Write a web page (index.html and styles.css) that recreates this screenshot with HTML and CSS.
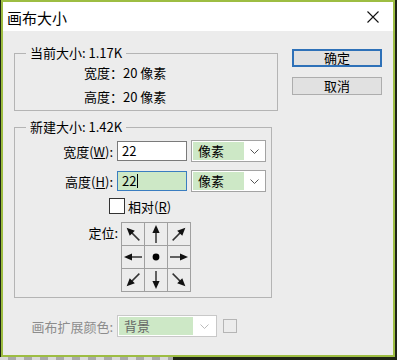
FILE: index.html
```html
<!DOCTYPE html>
<html lang="zh-CN">
<head>
    <meta charset="UTF-8">
    <title>画布大小</title>
    <link rel="stylesheet" href="styles.css">
</head>
<body>

    <div class="dialog">
        <div class="titlebar">
            <span class="title">画布大小</span>
            <svg class="close" width="12" height="12" viewBox="0 0 12 12">
                <path d="M0.5 0.5 L11.5 11.5 M11.5 0.5 L0.5 11.5" stroke="#111" stroke-width="1.1" fill="none"/>
            </svg>
        </div>

        <div class="dialog-body">
            <div class="main">
                <!-- current size -->
                <fieldset class="group group-current">
                    <legend>当前大小: 1.17K</legend>
                    <div class="info-row">宽度：20 像素</div>
                    <div class="info-row">高度：20 像素</div>
                </fieldset>

                <!-- new size -->
                <fieldset class="group group-new">
                    <legend>新建大小: 1.42K</legend>

                    <div class="field-row">
                        <span class="field-label">宽度(<u>W</u>):</span>
                        <div class="input">22</div>
                        <div class="select">
                            <span class="select-value">像素</span>
                            <span class="select-arrow">
                                <svg width="9" height="5" viewBox="0 0 9 5"><path d="M0.5 0.5 L4.5 4.5 L8.5 0.5" stroke="#555" fill="none"/></svg>
                            </span>
                        </div>
                    </div>

                    <div class="field-row">
                        <span class="field-label">高度(<u>H</u>):</span>
                        <div class="input input-focus">22<span class="caret"></span></div>
                        <div class="select">
                            <span class="select-value">像素</span>
                            <span class="select-arrow">
                                <svg width="9" height="5" viewBox="0 0 9 5"><path d="M0.5 0.5 L4.5 4.5 L8.5 0.5" stroke="#555" fill="none"/></svg>
                            </span>
                        </div>
                    </div>

                    <div class="check-row">
                        <span class="checkbox"></span>
                        <span class="check-label">相对(<u>R</u>)</span>
                    </div>

                    <div class="anchor-row">
                        <span class="anchor-label">定位:</span>
                        <div class="anchor-grid">
                            <div class="cell"><svg class="arrow rot-315" viewBox="0 0 22 22"><path d="M11 20 V8" stroke="#333" stroke-width="1.5"/><path d="M11 2 L7.4 10 L14.6 10 Z" fill="#111"/></svg></div>
                            <div class="cell"><svg class="arrow" viewBox="0 0 22 22"><path d="M11 20 V8" stroke="#333" stroke-width="1.5"/><path d="M11 2 L7.4 10 L14.6 10 Z" fill="#111"/></svg></div>
                            <div class="cell"><svg class="arrow rot-45" viewBox="0 0 22 22"><path d="M11 20 V8" stroke="#333" stroke-width="1.5"/><path d="M11 2 L7.4 10 L14.6 10 Z" fill="#111"/></svg></div>
                            <div class="cell"><svg class="arrow rot-270" viewBox="0 0 22 22"><path d="M11 20 V8" stroke="#333" stroke-width="1.5"/><path d="M11 2 L7.4 10 L14.6 10 Z" fill="#111"/></svg></div>
                            <div class="cell"><svg class="arrow" viewBox="0 0 22 22"><circle cx="11" cy="11" r="3.4" fill="#000"/></svg></div>
                            <div class="cell"><svg class="arrow rot-90" viewBox="0 0 22 22"><path d="M11 20 V8" stroke="#333" stroke-width="1.5"/><path d="M11 2 L7.4 10 L14.6 10 Z" fill="#111"/></svg></div>
                            <div class="cell"><svg class="arrow rot-225" viewBox="0 0 22 22"><path d="M11 20 V8" stroke="#333" stroke-width="1.5"/><path d="M11 2 L7.4 10 L14.6 10 Z" fill="#111"/></svg></div>
                            <div class="cell"><svg class="arrow rot-180" viewBox="0 0 22 22"><path d="M11 20 V8" stroke="#333" stroke-width="1.5"/><path d="M11 2 L7.4 10 L14.6 10 Z" fill="#111"/></svg></div>
                            <div class="cell"><svg class="arrow rot-135" viewBox="0 0 22 22"><path d="M11 20 V8" stroke="#333" stroke-width="1.5"/><path d="M11 2 L7.4 10 L14.6 10 Z" fill="#111"/></svg></div>
                        </div>
                    </div>
                </fieldset>

                <!-- canvas extension colour (disabled) -->
                <div class="extend-row">
                    <span class="extend-label">画布扩展颜色:</span>
                    <div class="select select-disabled">
                        <span class="select-value">背景</span>
                        <span class="select-arrow">
                            <svg width="9" height="5" viewBox="0 0 9 5"><path d="M0.5 0.5 L4.5 4.5 L8.5 0.5" stroke="#bbb" fill="none"/></svg>
                        </span>
                    </div>
                    <span class="swatch"></span>
                </div>
            </div>

            <div class="buttons">
                <button class="btn btn-default">确定</button>
                <button class="btn">取消</button>
            </div>
        </div>
    </div>

    <div class="backdrop">
        <div class="checker"></div>
    </div>

</body>
</html>
```

FILE: styles.css
```css
/* Basic reset */
* {
    margin: 0;
    padding: 0;
    box-sizing: border-box;
}

body {
    font-family: "Noto Sans CJK SC", "Noto Sans", sans-serif;
    font-size: 13px;
    color: #000;
    background: #1e2416;
    width: 397px;
    height: 360px;
    overflow: hidden;
}

.dialog {
    margin-left: 1px;
    width: 394px;
    height: 357px;
    border: 2px solid #9dbd42;
    background: #ececec;
    display: flex;
    flex-direction: column;
}

/* Title bar */
.titlebar {
    height: 29px;
    background: #fff;
    display: flex;
    align-items: center;
    justify-content: space-between;
    padding: 1px 14px 0 4px;
}

.title {
    font-size: 15px;
    line-height: 1;
}

.dialog-body {
    display: flex;
    padding: 14px 0 0 11px;
}

.main {
    width: 264px;
}

/* Group boxes */
.group {
    border: 1px solid #b4b4b4;
    min-width: 0;
}

.group legend {
    margin-left: 11px;
    padding: 0 4px;
    line-height: 16px;
}

.group-current {
    width: 264px;
    padding: 0 0 1px 0;
}

.info-row {
    line-height: 24px;
    padding-left: 69px;
}

.group-new {
    width: 258px;
    margin-top: 8px;
    padding: 5px 0 5px 0;
}

.field-row {
    display: flex;
    align-items: center;
    height: 22px;
}

.field-row + .field-row {
    margin-top: 8px;
}

.field-label {
    width: 98px;
    margin-right: 4px;
    text-align: right;
}

.input {
    width: 70px;
    height: 20px;
    border: 1px solid #7a7a7a;
    background: #fff;
    padding-left: 4px;
    line-height: 18px;
    display: flex;
    align-items: center;
}

.input-focus {
    border-color: #3a7dc0;
    background: #cde8c6;
}

.caret {
    width: 1px;
    height: 14px;
    background: #000;
    margin-left: 1px;
}

.select {
    width: 75px;
    height: 22px;
    margin-left: 4px;
    border: 1px solid #a3a3a3;
    background: #fff;
    display: flex;
    padding: 1px;
}

.select-value {
    width: 51px;
    background: #cde8c6;
    padding-left: 5px;
    line-height: 18px;
}

.select-arrow {
    flex: 1;
    display: flex;
    align-items: center;
    justify-content: center;
}

/* Relative checkbox */
.check-row {
    display: flex;
    align-items: center;
    height: 16px;
    margin-top: 6px;
    padding-left: 94px;
}

.checkbox {
    width: 16px;
    height: 16px;
    border: 1px solid #333;
    background: #fff;
}

.check-label {
    margin-left: 3px;
}

/* Anchor grid */
.anchor-row {
    display: flex;
    margin-top: 8px;
}

.anchor-label {
    width: 103px;
    margin-right: 3px;
    text-align: right;
    line-height: 22px;
}

.anchor-grid {
    display: grid;
    grid-template-columns: repeat(3, 22px);
    grid-auto-rows: 22px;
    gap: 1px;
    padding: 1px;
    width: 70px;
    background: #a0a0a0;
}

.cell {
    background: #ececec;
}

.arrow {
    display: block;
    width: 22px;
    height: 22px;
}

.rot-45 { transform: rotate(45deg); }
.rot-90 { transform: rotate(90deg); }
.rot-135 { transform: rotate(135deg); }
.rot-180 { transform: rotate(180deg); }
.rot-225 { transform: rotate(225deg); }
.rot-270 { transform: rotate(270deg); }
.rot-315 { transform: rotate(315deg); }

/* Canvas extension colour */
.extend-row {
    display: flex;
    align-items: center;
    height: 22px;
    margin-top: 17px;
}

.extend-label {
    width: 99px;
    margin-right: 4px;
    text-align: right;
    color: #8c8c8c;
}

.select-disabled {
    width: 100px;
    margin-left: 0;
    border-color: #c8c8c8;
}

.select-disabled .select-value {
    width: 74px;
    color: #666;
}

.swatch {
    width: 14px;
    height: 14px;
    margin-left: 6px;
    border: 1px solid #b5b5b5;
}

/* Buttons */
.buttons {
    display: flex;
    flex-direction: column;
    gap: 10px;
    margin: 4px 0 0 14px;
}

.btn {
    width: 90px;
    height: 18px;
    border: 1px solid #adadad;
    background: #e1e1e1;
    font-family: inherit;
    font-size: 13px;
    line-height: 14px;
    color: #000;
}

.btn-default {
    border: 2px solid #2e71b8;
}

/* Bits of the canvas below the dialog */
.backdrop {
    height: 3px;
    display: flex;
}

.checker {
    width: 173px;
    background: repeating-linear-gradient(90deg, #d9d9d9 0 8px, #a9a9a9 8px 16px);
}
```
